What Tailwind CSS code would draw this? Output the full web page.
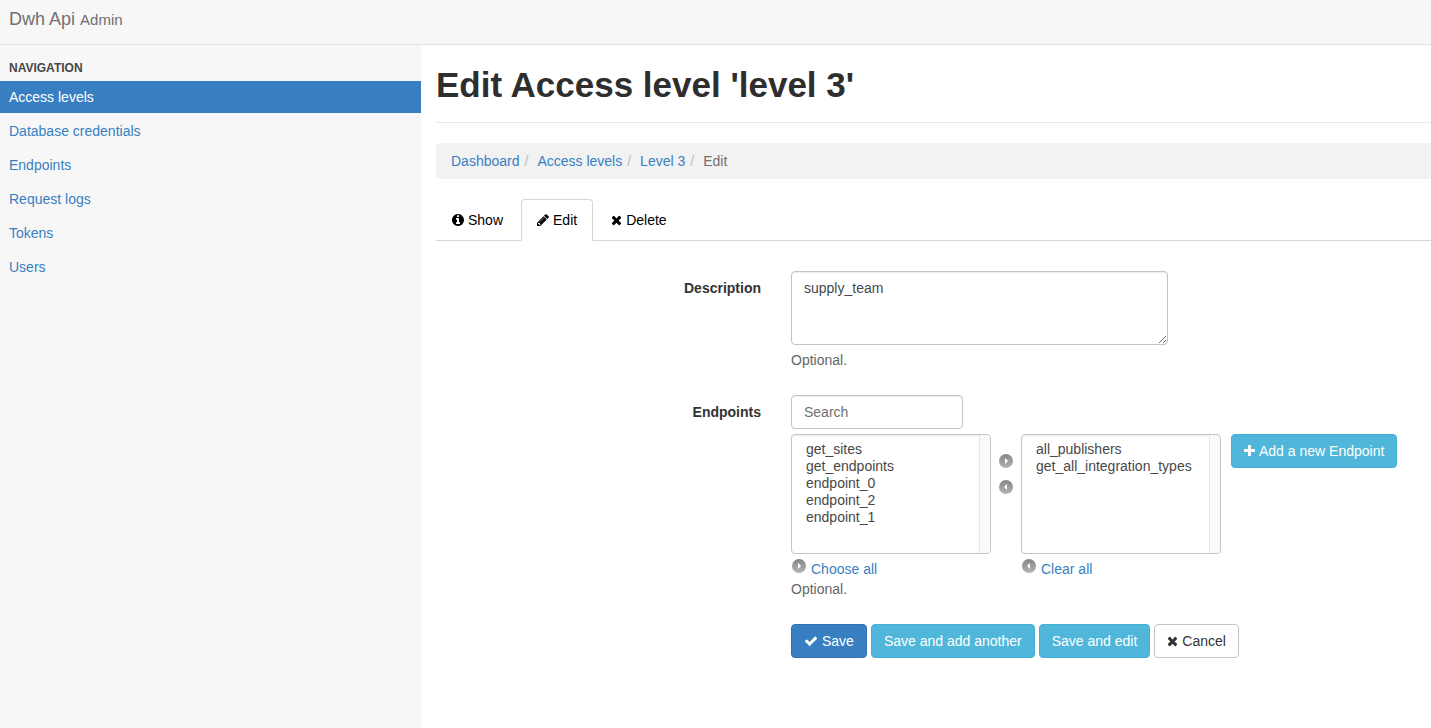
<!DOCTYPE html>
<html lang="en">
<head>
<meta charset="utf-8">
<meta name="viewport" content="width=device-width, initial-scale=1">
<title>Edit Access level 'level 3'</title>
<script src="https://cdn.jsdelivr.net/npm/@tailwindcss/browser@4"></script>
</head>
<body class="flex min-h-screen flex-col overflow-x-hidden bg-white font-['Liberation_Sans',Arial,sans-serif] text-sm leading-5 text-[#333]">
<svg class="absolute size-0" aria-hidden="true">
  <defs>
    <linearGradient id="disc" x1="0" y1="0" x2="0" y2="1"><stop offset="0" stop-color="#868686"/><stop offset="1" stop-color="#b4b4b4"/></linearGradient>
    <symbol id="times" viewBox="192 0 1408 1792"><path d="M1490 1322q0 40-28 68l-136 136q-28 28-68 28t-68-28l-294-294-294 294q-28 28-68 28t-68-28l-136-136q-28-28-28-68t28-68l294-294-294-294q-28-28-28-68t28-68l136-136q28-28 68-28t68 28l294 294 294-294q28-28 68-28t68 28l136 136q28 28 28 68t-28 68l-294 294 294 294q28 28 28 68z"/></symbol>
    <symbol id="right" viewBox="0 0 14 14"><circle cx="7" cy="7" r="7" fill="url(#disc)"/><path d="M6 4v6l3-3z" fill="#fff"/></symbol>
    <symbol id="left" viewBox="0 0 14 14"><circle cx="7" cy="7" r="7" fill="url(#disc)"/><path d="M8 4v6l-3-3z" fill="#fff"/></symbol>
  </defs>
</svg>

<header class="h-[45px] shrink-0 border-b border-[#e2e2e2] bg-[#f7f7f7] px-[9px] py-[9px]">
  <a href="#" class="text-lg leading-5 text-[#707070]">Dwh Api <small class="text-[15px]">Admin</small></a>
</header>

<div class="flex grow">
  <nav aria-label="Navigation" class="w-[421px] shrink-0 bg-[#f7f7f7] pt-[13px]">
    <h2 class="px-[9px] pb-[3px] text-xs leading-5 font-bold text-[#484848]">NAVIGATION</h2>
    <ul class="flex flex-col gap-0.5 text-[#387fc2]">
      <li><a href="#" aria-current="page" class="block bg-[#387fc2] px-[9px] py-1.5 text-white">Access levels</a></li>
      <li><a href="#" class="block px-[9px] py-1.5">Database credentials</a></li>
      <li><a href="#" class="block px-[9px] py-1.5">Endpoints</a></li>
      <li><a href="#" class="block px-[9px] py-1.5">Request logs</a></li>
      <li><a href="#" class="block px-[9px] py-1.5">Tokens</a></li>
      <li><a href="#" class="block px-[9px] py-1.5">Users</a></li>
    </ul>
  </nav>

  <main class="min-w-0 grow pl-[15px]">
    <h1 class="border-b border-[#e9e9e9] pt-5 pb-[18px] text-[35px] leading-[39px] font-bold text-[#2e2e2e]">Edit Access level 'level 3'</h1>

    <ol class="mt-5 flex rounded-l-sm bg-[#f2f2f2] px-[15px] py-2 text-[#387fc2]">
      <li><a href="#">Dashboard</a></li>
      <li class="before:px-[5px] before:text-[#bbb] before:content-['/']"><a href="#" class="pl-1">Access levels</a></li>
      <li class="before:px-[5px] before:text-[#bbb] before:content-['/']"><a href="#" class="pl-1">Level 3</a></li>
      <li class="text-[#707070] before:px-[5px] before:text-[#bbb] before:content-['/']"><span class="pl-1">Edit</span></li>
    </ol>

    <ul class="mt-5 flex gap-0.5 border-b border-[#d6d6d6] text-black">
      <li class="-mb-px"><a href="#" class="flex items-center gap-1 border border-transparent px-[15px] py-2.5">
        <svg class="h-3.5 w-3" viewBox="0 0 1536 1792" fill="currentColor"><path d="M1024 1376v-160q0-14-9-23t-23-9h-96v-512q0-14-9-23t-23-9h-320q-14 0-23 9t-9 23v160q0 14 9 23t23 9h96v320h-96q-14 0-23 9t-9 23v160q0 14 9 23t23 9h448q14 0 23-9t9-23zM896 480v-160q0-14-9-23t-23-9h-192q-14 0-23 9t-9 23v160q0 14 9 23t23 9h192q14 0 23-9t9-23zM1536 896q0 209-103 385.5t-279.5 279.5-385.5 103-385.5-103-279.5-279.5-103-385.5 103-385.5 279.5-279.5 385.5-103 385.5 103 279.5 279.5 103 385.5z"/></svg>Show</a></li>
      <li class="-mb-px"><a href="#" aria-current="page" class="flex items-center gap-1 rounded-t border border-[#d6d6d6] border-b-white bg-white px-[15px] py-2.5">
        <svg class="h-3.5 w-3" viewBox="128 0 1536 1792" fill="currentColor"><path d="M491 1536l91-91-235-235-91 91v107h128v128h107zm523-928q0-22-22-22-10 0-17 7l-542 542q-7 7-7 17 0 22 22 22 10 0 17-7l542-542q7-7 7-17zm-54-192l416 416-832 832h-416v-416zm683 96q0 53-37 90l-166 166-416-416 166-165q36-38 90-38 53 0 91 38l235 234q37 39 37 91z"/></svg>Edit</a></li>
      <li class="-mb-px"><a href="#" class="flex items-center gap-1 border border-transparent px-[15px] py-2.5">
        <svg class="h-3.5 w-[11px]" fill="currentColor"><use href="#times"/></svg>Delete</a></li>
    </ul>

    <form class="grid grid-cols-[325px_1fr] gap-x-[30px] pt-[30px]">
      <label for="description" class="pt-[7px] text-right font-bold">Description</label>
      <div class="pb-[25px]">
        <textarea id="description" rows="2" class="block h-[74px] w-[377px] rounded border border-[#c4c4c4] px-3 py-1.5 text-[#484848] shadow-[inset_0_1px_1px_rgba(0,0,0,0.075)]">supply_team</textarea>
        <p class="pt-[5px] text-[#666]">Optional.</p>
      </div>

      <label for="search" class="pt-[7px] text-right font-bold">Endpoints</label>
      <div>
        <input id="search" type="text" placeholder="Search" class="block h-[34px] w-[172px] rounded border border-[#c4c4c4] px-3 py-1.5 shadow-[inset_0_1px_1px_rgba(0,0,0,0.075)] placeholder:text-[#707070]">
        <div class="mt-[5px] flex items-start">
          <div>
            <div class="relative">
              <select multiple aria-label="Available endpoints" class="block h-[120px] w-[200px] overflow-hidden rounded border border-[#c4c4c4] px-3 py-1.5 leading-4 text-[#484848] shadow-[inset_0_1px_1px_rgba(0,0,0,0.075)]">
                <option class="px-0.5 pb-px">get_sites</option>
                <option class="px-0.5 pb-px">get_endpoints</option>
                <option class="px-0.5 pb-px">endpoint_0</option>
                <option class="px-0.5 pb-px">endpoint_2</option>
                <option class="px-0.5 pb-px">endpoint_1</option>
              </select>
              <span class="absolute inset-y-px right-px w-[11px] rounded-r-sm border-l border-[#e6e6e6] bg-[#fafafa]"></span>
            </div>
            <a href="#" class="flex h-[25px] gap-[5px] pt-[5px] pl-px text-[#387fc2]"><svg class="size-3.5"><use href="#right"/></svg><span>Choose all</span></a>
          </div>
          <div class="flex w-[30px] flex-col items-center gap-3 pt-5">
            <button type="button" aria-label="Add selected" class="size-3.5"><svg class="size-3.5"><use href="#right"/></svg></button>
            <button type="button" aria-label="Remove selected" class="size-3.5"><svg class="size-3.5"><use href="#left"/></svg></button>
          </div>
          <div>
            <div class="relative">
              <select multiple aria-label="Chosen endpoints" class="block h-[120px] w-[200px] overflow-hidden rounded border border-[#c4c4c4] px-3 py-1.5 leading-4 text-[#484848] shadow-[inset_0_1px_1px_rgba(0,0,0,0.075)]">
                <option class="px-0.5 pb-px">all_publishers</option>
                <option class="px-0.5 pb-px">get_all_integration_types</option>
              </select>
              <span class="absolute inset-y-px right-px w-[11px] rounded-r-sm border-l border-[#e6e6e6] bg-[#fafafa]"></span>
            </div>
            <a href="#" class="flex h-[25px] gap-[5px] pt-[5px] pl-px text-[#387fc2]"><svg class="size-3.5"><use href="#left"/></svg><span>Clear all</span></a>
          </div>
          <button type="button" class="ml-2.5 flex items-center gap-1 rounded border border-[#42b0d5] bg-[#50b7da] px-3 py-1.5 whitespace-nowrap text-white">
            <svg class="h-3.5 w-[11px]" viewBox="192 0 1408 1792" fill="currentColor"><path d="M1600 736v192q0 40-28 68t-68 28h-416v416q0 40-28 68t-68 28h-192q-40 0-68-28t-28-68v-416h-416q-40 0-68-28t-28-68v-192q0-40 28-68t68-28h416v-416q0-40 28-68t68-28h192q40 0 68 28t28 68v416h416q40 0 68 28t28 68z"/></svg>Add a new Endpoint</button>
        </div>
        <p class="text-[#666]">Optional.</p>
      </div>

      <div class="col-start-2 flex gap-1 pt-[25px] whitespace-nowrap">
        <button type="submit" class="flex items-center gap-1 rounded border border-[#3272b0] bg-[#387fc2] px-3 py-1.5 text-white">
          <svg class="size-3.5" viewBox="0 0 1792 1792" fill="currentColor"><path d="M1671 566q0 40-28 68l-724 724-136 136q-28 28-68 28t-68-28l-136-136-362-362q-28-28-28-68t28-68l136-136q28-28 68-28t68 28l294 295 656-657q28-28 68-28t68 28l136 136q28 28 28 68z"/></svg>Save</button>
        <button type="submit" class="rounded border border-[#42b0d5] bg-[#50b7da] px-3 py-1.5 text-white">Save and add another</button>
        <button type="submit" class="rounded border border-[#42b0d5] bg-[#50b7da] px-3 py-1.5 text-white">Save and edit</button>
        <button type="button" class="flex items-center gap-1 rounded border border-[#c4c4c4] bg-white px-3 py-1.5"><svg class="h-3.5 w-[11px]" fill="currentColor"><use href="#times"/></svg>Cancel</button>
      </div>
    </form>
  </main>
</div>
</body>
</html>
